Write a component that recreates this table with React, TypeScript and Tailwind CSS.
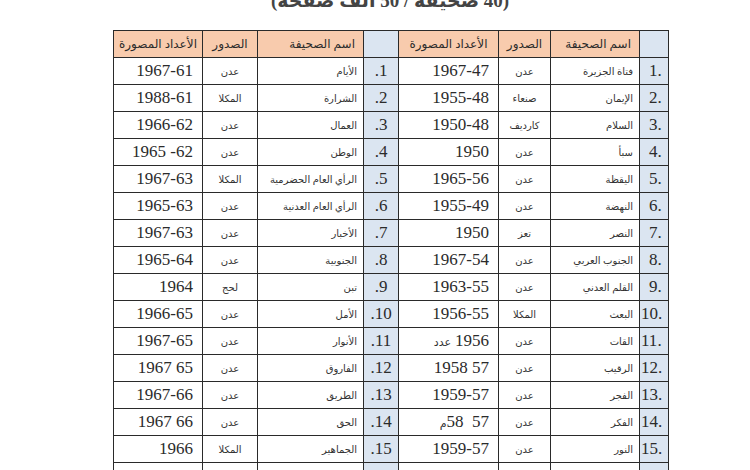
type Side = { name: string; src: string; issues: string; pre?: string };

const rows: { r: Side; l: Side }[] = [
  { r: { name: 'فتاة الجزيرة', src: 'عدن', issues: '1967-47' }, l: { name: 'الأيام', src: 'عدن', issues: '1967-61' } },
  { r: { name: 'الإيمان', src: 'صنعاء', issues: '1955-48' }, l: { name: 'الشرارة', src: 'المكلا', issues: '1988-61' } },
  { r: { name: 'السلام', src: 'كارديف', issues: '1950-48' }, l: { name: 'العمال', src: 'عدن', issues: '1966-62' } },
  { r: { name: 'سبأ', src: 'عدن', issues: '1950' }, l: { name: 'الوطن', src: 'عدن', issues: '1965 -62' } },
  { r: { name: 'اليقظة', src: 'عدن', issues: '1965-56' }, l: { name: 'الرأي العام الحضرمية', src: 'المكلا', issues: '1967-63' } },
  { r: { name: 'النهضة', src: 'عدن', issues: '1955-49' }, l: { name: 'الرأي العام العدنية', src: 'عدن', issues: '1965-63' } },
  { r: { name: 'النصر', src: 'تعز', issues: '1950' }, l: { name: 'الأخبار', src: 'عدن', issues: '1967-63' } },
  { r: { name: 'الجنوب العربي', src: 'عدن', issues: '1967-54' }, l: { name: 'الجنوبية', src: 'عدن', issues: '1965-64' } },
  { r: { name: 'القلم العدني', src: 'عدن', issues: '1963-55' }, l: { name: 'تبن', src: 'لحج', issues: '1964' } },
  { r: { name: 'البعث', src: 'المكلا', issues: '1956-55' }, l: { name: 'الأمل', src: 'عدن', issues: '1966-65' } },
  { r: { name: 'القات', src: 'عدن', issues: '1956', pre: 'عدد' }, l: { name: 'الأنوار', src: 'عدن', issues: '1967-65' } },
  { r: { name: 'الرقيب', src: 'عدن', issues: '1958 57' }, l: { name: 'الفاروق', src: 'عدن', issues: '1967 65' } },
  { r: { name: 'الفجر', src: 'عدن', issues: '1959-57' }, l: { name: 'الطريق', src: 'عدن', issues: '1967-66' } },
  { r: { name: 'الفكر', src: 'عدن', issues: '58  57', pre: 'م' }, l: { name: 'الحق', src: 'عدن', issues: '1967 66' } },
  { r: { name: 'النور', src: 'عدن', issues: '1959-57' }, l: { name: 'الجماهير', src: 'المكلا', issues: '1966' } },
  { r: { name: 'الثورة', src: 'عدن', issues: '1965-58' }, l: { name: 'الكفاح', src: 'عدن', issues: '1968-66' } },
];

const cell = 'border border-[#2a2a2a] h-[27px] p-0 overflow-hidden whitespace-nowrap';

const HeaderCells = () => (
  <>
    <th className={`${cell} bg-[#dbe5f1]`}></th>
    <th className={`${cell} bg-[#f8cbad] text-right pr-[8px] font-normal text-[12px]`}>اسم الصحيفة</th>
    <th className={`${cell} bg-[#f8cbad] text-center font-normal text-[12px]`}>الصدور</th>
    <th className={`${cell} bg-[#f8cbad] text-center font-normal text-[12px]`}>الأعداد المصورة</th>
  </>
);

const Issues = ({ s }: { s: Side }) => (
  <td className={`${cell} pr-[9px] text-[17px]`}>
    <div dir="ltr" className="flex flex-row justify-end items-baseline">
      {s.pre === 'عدد' && <span className="text-[11px] text-[#333] mr-[4px]">{s.pre}</span>}
      {s.pre === 'م' && <span className="text-[11px] text-[#333]">{s.pre}</span>}
      <span className="whitespace-pre">{s.issues}</span>
    </div>
  </td>
);

export default function App() {
  return (
    <div className="w-[750px] h-[470px] overflow-hidden bg-white text-[#2b2b2b]" style={{ fontFamily: '"Liberation Serif", "DejaVu Sans", serif' }}>
      <div dir="rtl" className="h-[30px] -mt-[14px] pl-[30px] text-center text-[19px] leading-[30px] font-bold text-[#444]">
        (40 صحيفة / 50 ألف صفحة)
      </div>
      <div className="h-[14px]"></div>
      <table dir="rtl" className="ml-[113px] table-fixed border-collapse w-[555px]">
        <colgroup>
          <col className="w-[29px]" />
          <col className="w-[89px]" />
          <col className="w-[52px]" />
          <col className="w-[100px]" />
          <col className="w-[35px]" />
          <col className="w-[106px]" />
          <col className="w-[55px]" />
          <col className="w-[89px]" />
        </colgroup>
        <thead>
          <tr>
            <HeaderCells />
            <HeaderCells />
          </tr>
        </thead>
        <tbody>
          {rows.map((row, i) => (
            <tr key={i}>
              <td className={`${cell} bg-[#dbe5f1] text-left text-[17px]`} dir="ltr">
                <span className={i < 9 ? 'pl-[9px]' : 'pl-[1px]'}>{i + 1}.</span>
              </td>
              <td className={`${cell} text-right pr-[6px] text-[10px] text-[#333]`}>{row.r.name}</td>
              <td className={`${cell} text-center text-[10px] text-[#333]`}>{row.r.src}</td>
              <Issues s={row.r} />
              <td className={`${cell} bg-[#dbe5f1] text-center text-[17px]`}>{i + 1}.</td>
              <td className={`${cell} text-right pr-[6px] text-[10px] text-[#333]`}>{row.l.name}</td>
              <td className={`${cell} text-center text-[10px] text-[#333]`}>{row.l.src}</td>
              <Issues s={row.l} />
            </tr>
          ))}
        </tbody>
      </table>
    </div>
  );
}
